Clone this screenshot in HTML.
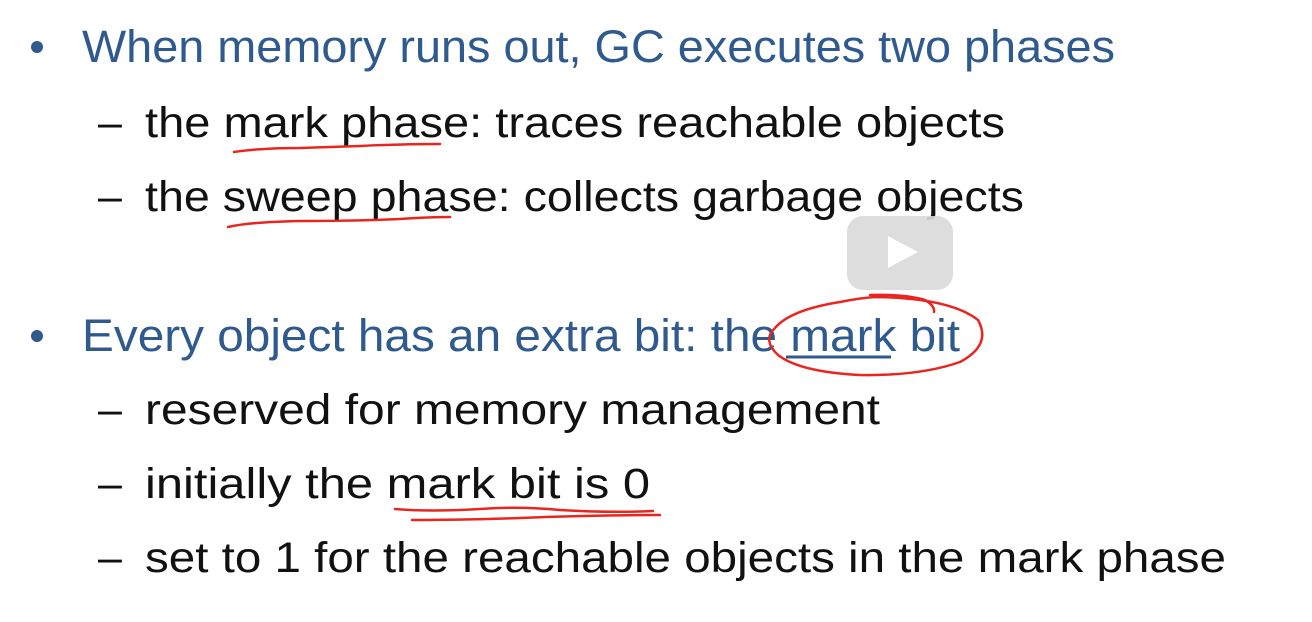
<!DOCTYPE html>
<html><head><meta charset="utf-8"><style>
html,body{margin:0;padding:0;background:#fff;width:1312px;height:622px;overflow:hidden}
svg{display:block}
.b{fill:#2f5a8e;font-family:"Liberation Sans",sans-serif;font-size:45px}
.k{fill:#111;font-family:"Liberation Sans",sans-serif;font-size:43px}
</style></head><body>
<svg width="1312" height="622" viewBox="0 0 1312 622" xmlns="http://www.w3.org/2000/svg">
<circle cx="37" cy="47" r="6" fill="#2f5a8e"/>
<circle cx="37" cy="336" r="6" fill="#2f5a8e"/>
<text class="b" x="82" y="62" textLength="1033" lengthAdjust="spacingAndGlyphs">When memory runs out, GC executes two phases</text>
<text class="k" x="98" y="137">–</text>
<text class="k" x="145" y="137" textLength="860" lengthAdjust="spacingAndGlyphs">the mark phase: traces reachable objects</text>
<text class="k" x="98" y="211">–</text>
<text class="k" x="145" y="211" textLength="879" lengthAdjust="spacingAndGlyphs">the sweep phase: collects garbage objects</text>
<text class="b" x="82" y="351" textLength="878" lengthAdjust="spacingAndGlyphs">Every object has an extra bit: the mark bit</text>
<line x1="786" y1="357" x2="891" y2="357" stroke="#2f5a8e" stroke-width="3"/>
<text class="k" x="98" y="424">–</text>
<text class="k" x="145" y="424" textLength="735" lengthAdjust="spacingAndGlyphs">reserved for memory management</text>
<text class="k" x="98" y="498">–</text>
<text class="k" x="145" y="498" textLength="505" lengthAdjust="spacingAndGlyphs">initially the mark bit is 0</text>
<text class="k" x="98" y="572">–</text>
<text class="k" x="145" y="572" textLength="1081" lengthAdjust="spacingAndGlyphs">set to 1 for the reachable objects in the mark phase</text>
<g fill="none" stroke="#e8261f" stroke-width="2.5" stroke-linecap="round">
<path d="M234 152 Q260 148 300 148 Q330 147 360 146 Q400 144 440 144"/>
<path d="M228 227 Q250 222 300 221 Q360 221 400 219 Q430 217 450 217"/>
<path d="M395 509 Q430 512 480 509 Q520 506 560 510 Q610 513 653 511"/>
<path d="M412 520 Q460 520 520 518 Q590 515 660 515"/>
<path d="M875 297 Q950 298 978 320 Q992 345 960 362 Q920 376 860 375 Q800 372 778 355 Q762 340 775 328 Q790 310 840 302 Q860 298 875 297"/>
<path d="M870 295 Q905 294 925 300 Q935 306 934 312"/>
</g>
<rect x="847" y="216" width="106" height="74" rx="16" fill="#dadada" opacity="0.92"/>
<path d="M888 236 L888 268 L918 252 Z" fill="#fff"/>
</svg>
</body></html>
